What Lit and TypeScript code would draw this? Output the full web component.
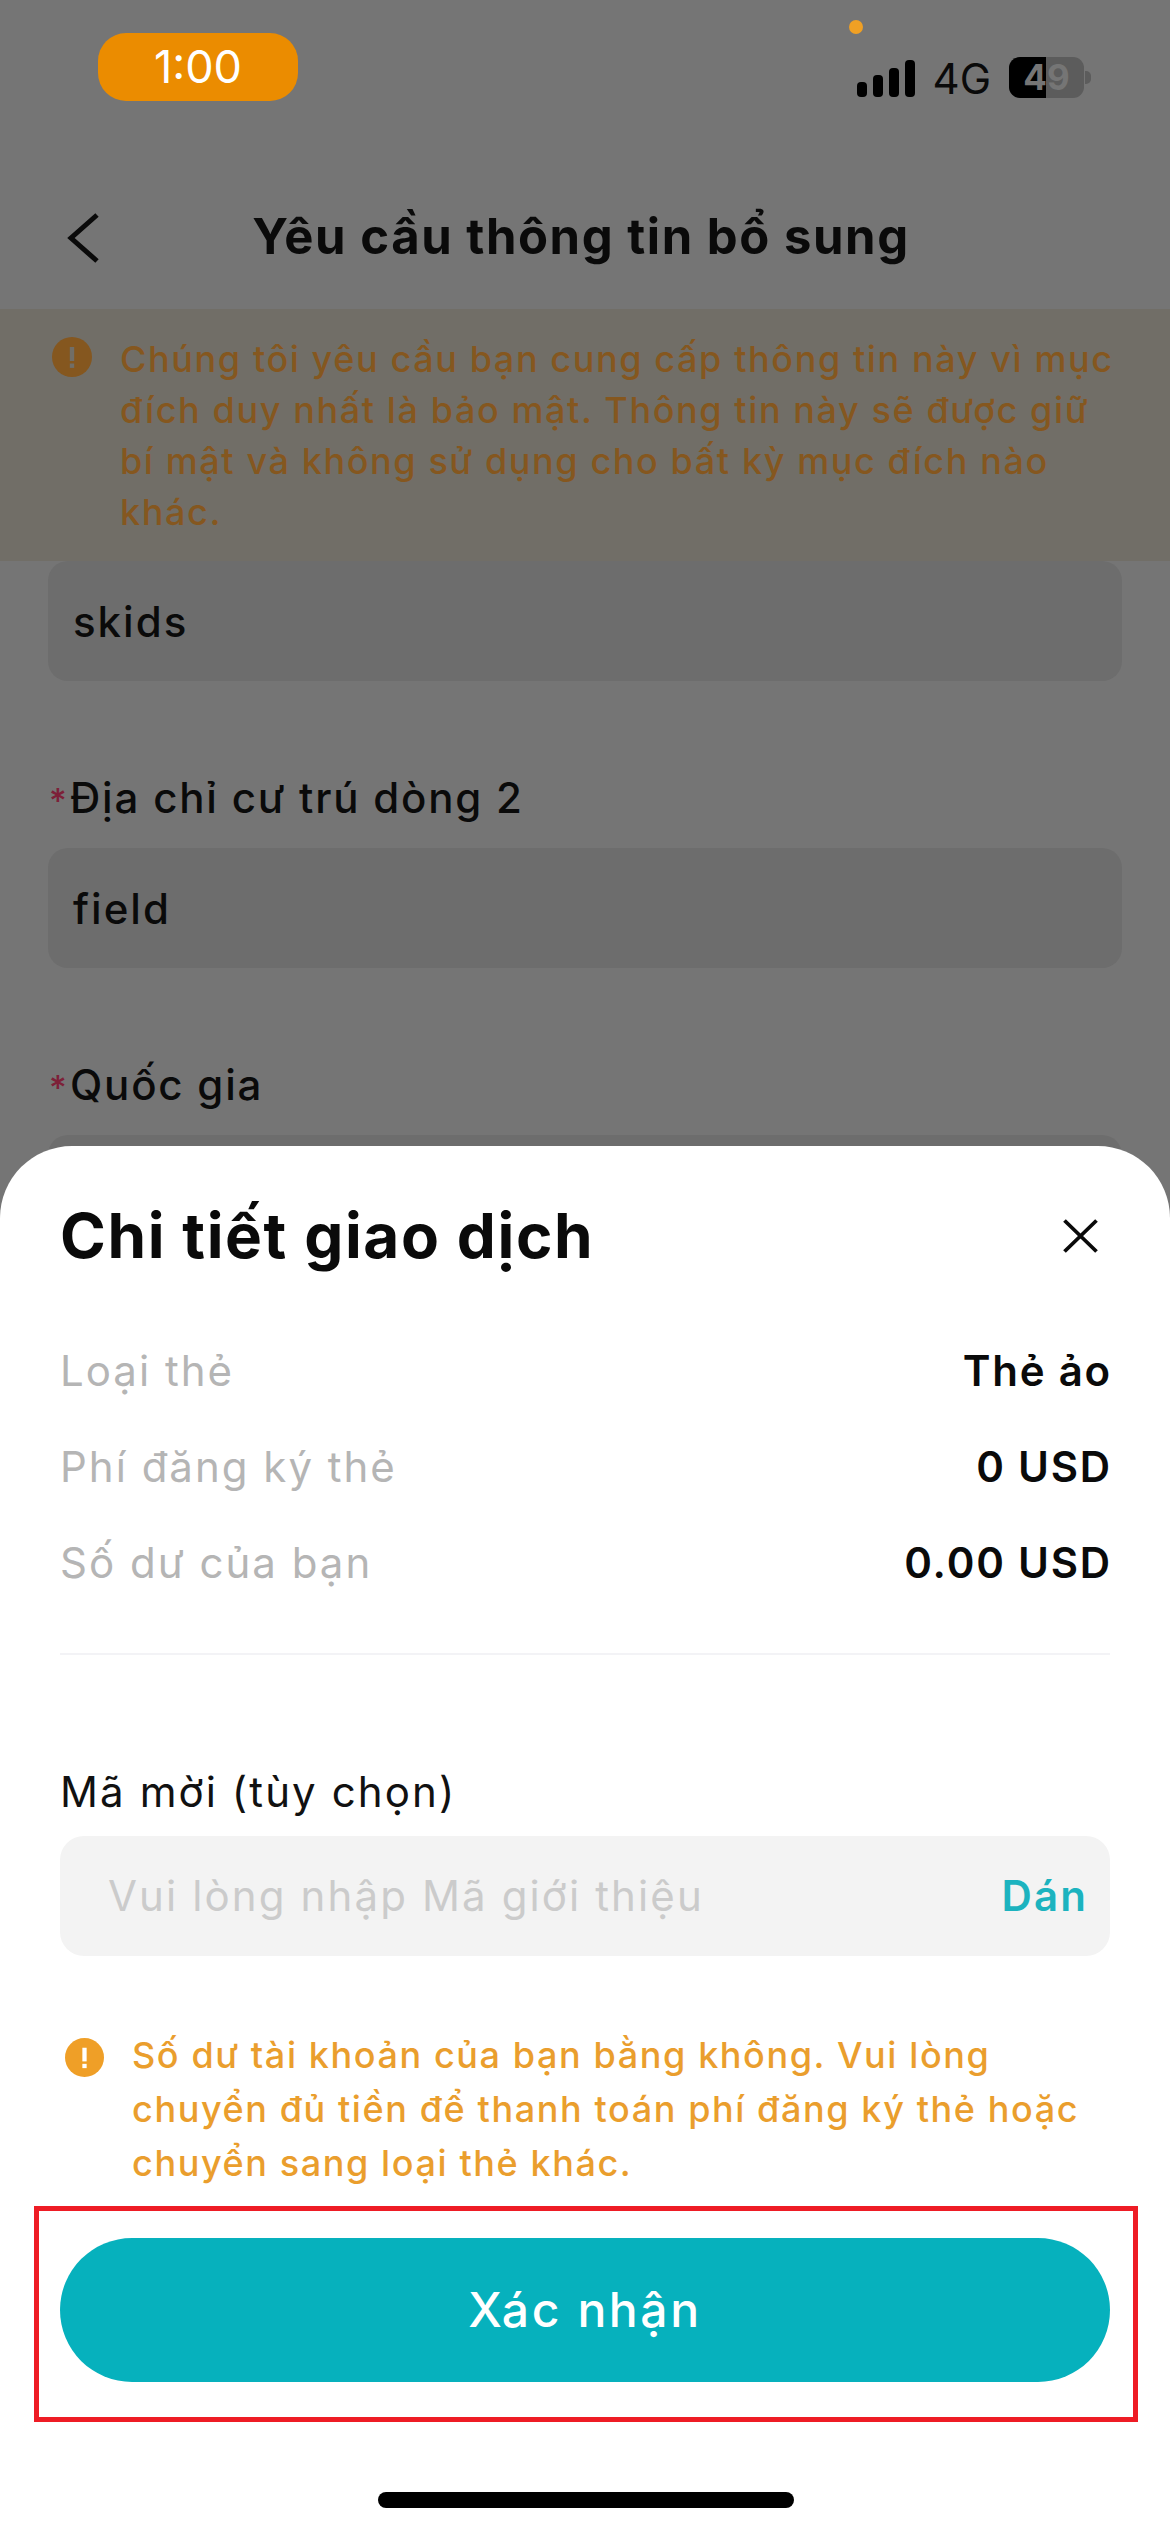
import { LitElement, html, css, svg } from "lit";
import { customElement } from "lit/decorators.js";

const warn = (size: number, color: string, mark: string) => html`<svg class="warn" width=${size} height=${size} viewBox="0 0 40 40">
  <circle cx="20" cy="20" r="20" fill=${color}></circle>
  ${svg`<rect x="17.8" y="10" width="4.4" height="14" fill=${mark}></rect><rect x="17.8" y="26.5" width="4.4" height="4.4" fill=${mark}></rect>`}
</svg>`;

@customElement("app-root")
export class AppRoot extends LitElement {
  static styles = css`
    :host { display: block; width: 1170px; height: 2532px; position: relative; overflow: hidden; background: #757575; font-family: "Inter", "Noto Sans", sans-serif; color: #0a0a0a; }
    .page { display: flex; flex-direction: column; height: 100%; }
    .status { height: 170px; flex: none; display: flex; align-items: flex-start; justify-content: space-between; padding: 0 86px 0 98px; box-sizing: border-box; }
    .pill { margin-top: 33px; width: 200px; height: 68px; border-radius: 28px; background: #eb8c00; color: #fff; font: 400 45px/68px "Inter", sans-serif; text-align: center; }
    .status-right { position: relative; margin-top: 57px; display: flex; align-items: center; gap: 18px; height: 41px; }
    .dot { position: absolute; left: -8px; top: -37px; width: 14px; height: 14px; border-radius: 50%; background: #f0a024; }
    .net { font: 400 42px/41px "Inter", sans-serif; color: #0a0a0a; margin-top: 2px; }
    .batt { position: relative; width: 75px; height: 41px; border-radius: 11px; background: #5c5c5c; overflow: hidden; text-align: center; font: 700 35px/41px "Inter", sans-serif; color: #757575; }
    .batt i { position: absolute; left: 0; top: 0; bottom: 0; width: 37px; background: #000; }
    .batt span { position: relative; }
    .nub { position: absolute; right: -7px; top: 14px; width: 6px; height: 13px; border-radius: 0 5px 5px 0; background: #5c5c5c; }
    .nav { height: 139px; flex: none; position: relative; display: flex; align-items: center; justify-content: center; padding: 0 8px 5px 0; box-sizing: border-box; }
    .nav svg { position: absolute; left: 66px; top: 43px; }
    .nav h1 { margin: 0; font: 700 49px/60px "Inter", sans-serif; letter-spacing: 1.55px; color: #0a0a0a; }
    .banner { flex: none; height: 252px; box-sizing: border-box; background: #716e67; padding: 25px 40px 0 52px; display: flex; gap: 28px; color: #85571f; font: 500 36px/51px "Inter", sans-serif; letter-spacing: 1.6px; }
    .banner .warn { flex: none; margin-top: 3px; }
    .banner p { margin: 0; }
    .form { padding: 0 48px; display: flex; flex-direction: column; }
    .field { height: 120px; flex: none; border-radius: 20px; background: #6d6d6d; display: flex; align-items: center; padding: 2px 0 0 25px; box-sizing: border-box; font: 500 42px/1 "Inter", sans-serif; letter-spacing: 2px; color: #0a0a0a; }
    .label { font: 500 42px/50px "Inter", sans-serif; letter-spacing: 1.8px; margin-top: 92px; margin-bottom: 22px; padding-left: 1px; color: #0a0a0a; }
    .label b { display: inline-block; width: 21px; color: #7d2038; font-weight: 500; font-size: 34px; letter-spacing: 0; }
    .sheet { position: absolute; left: 0; right: 0; top: 1146px; bottom: 0; background: #fff; border-radius: 72px 72px 0 0; padding: 0 60px; display: flex; flex-direction: column; }
    .head { display: flex; justify-content: space-between; align-items: center; height: 126px; margin-top: 27px; }
    .head h2 { margin: 0; font: 700 62px/70px "Inter", sans-serif; letter-spacing: 1.6px; color: #0a0a0a; }
    .head svg { margin-right: 12px; }
    .rows { display: flex; flex-direction: column; gap: 48px; margin-top: 48px; padding-bottom: 66px; border-bottom: 2px solid #f3f3f6; }
    .row { display: flex; justify-content: space-between; align-items: center; height: 48px; font: 400 42px/48px "Inter", sans-serif; letter-spacing: 2px; color: #b5b5b5; }
    .row strong { font-weight: 600; color: #0a0a0a; letter-spacing: 1.8px; margin-right: -2px; }
    .invite { font: 400 42px/50px "Inter", sans-serif; letter-spacing: 2.1px; margin-top: 112px; margin-bottom: 19px; color: #111; }
    .input { height: 120px; flex: none; border-radius: 24px; background: #f3f3f3; display: flex; justify-content: space-between; align-items: center; padding: 0 22px 0 48px; font: 400 42px/1 "Inter", sans-serif; letter-spacing: 2.12px; color: #cbcbcb; }
    .input span { color: #1cb3bf; font-weight: 600; }
    .notice { display: flex; gap: 28px; margin-top: 72px; color: #ea9e2d; font: 500 36px/54px "Inter", sans-serif; letter-spacing: 1.6px; }
    .notice .warn { flex: none; margin-top: 10px; margin-left: 5px; }
    .notice p { margin: 0; }
    .confirm { margin-top: 48px; height: 144px; flex: none; border: 0; border-radius: 72px; background: #06b1bd; color: #fff; font: 500 48px/1 "Inter", sans-serif; letter-spacing: 2.6px; }
    .home { position: absolute; left: 378px; top: 2492px; width: 416px; height: 16px; border-radius: 8px; background: #000; }
    .mark { position: absolute; left: 34px; top: 2206px; width: 1104px; height: 216px; box-sizing: border-box; border: 5px solid #ee1c25; }
  `;

  render() {
    return html`
      <div class="page">
        <div class="status">
          <div class="pill">1:00</div>
          <div class="status-right">
            <span class="dot"></span>
            <svg width="58" height="37" viewBox="0 0 58 37" style="margin-top:2px">
              <rect x="0" y="22" width="10" height="15" rx="4"></rect>
              <rect x="16" y="15" width="10" height="22" rx="4"></rect>
              <rect x="32" y="8" width="10" height="29" rx="4"></rect>
              <rect x="48" y="0" width="10" height="37" rx="4"></rect>
            </svg>
            <span class="net">4G</span>
            <span class="batt"><i></i><span>49</span></span>
            <span class="nub"></span>
          </div>
        </div>
        <div class="nav">
          <svg width="34" height="50" viewBox="0 0 34 50" fill="none" stroke="#0a0a0a" stroke-width="5"><path d="M31 2 5 25l26 23"></path></svg>
          <h1>Yêu cầu thông tin bổ sung</h1>
        </div>
        <div class="banner">
          ${warn(40, "#85571f", "#716e67")}
          <p>Chúng tôi yêu cầu bạn cung cấp thông tin này vì mục đích duy nhất là bảo mật. Thông tin này sẽ được giữ bí mật và không sử dụng cho bất kỳ mục đích nào khác.</p>
        </div>
        <div class="form">
          <div class="field">skids</div>
          <div class="label"><b>*</b>Địa chỉ cư trú dòng 2</div>
          <div class="field">field</div>
          <div class="label"><b>*</b>Quốc gia</div>
          <div class="field"></div>
        </div>
      </div>
      <div class="sheet">
        <div class="head">
          <h2>Chi tiết giao dịch</h2>
          <svg width="35" height="34" viewBox="0 0 35 34" stroke="#0a0a0a" stroke-width="3.8" fill="none"><path d="M1.5 1.5l32 31M33.5 1.5l-32 31"></path></svg>
        </div>
        <div class="rows">
          <div class="row">Loại thẻ<strong>Thẻ ảo</strong></div>
          <div class="row">Phí đăng ký thẻ<strong>0 USD</strong></div>
          <div class="row">Số dư của bạn<strong>0.00 USD</strong></div>
        </div>
        <div class="invite">Mã mời (tùy chọn)</div>
        <div class="input">Vui lòng nhập Mã giới thiệu<span>Dán</span></div>
        <div class="notice">
          ${warn(39, "#ef9f27", "#ffffff")}
          <p>Số dư tài khoản của bạn bằng không. Vui lòng chuyển đủ tiền để thanh toán phí đăng ký thẻ hoặc chuyển sang loại thẻ khác.</p>
        </div>
        <button class="confirm">Xác nhận</button>
      </div>
      <div class="home"></div>
      <div class="mark"></div>
    `;
  }
}
